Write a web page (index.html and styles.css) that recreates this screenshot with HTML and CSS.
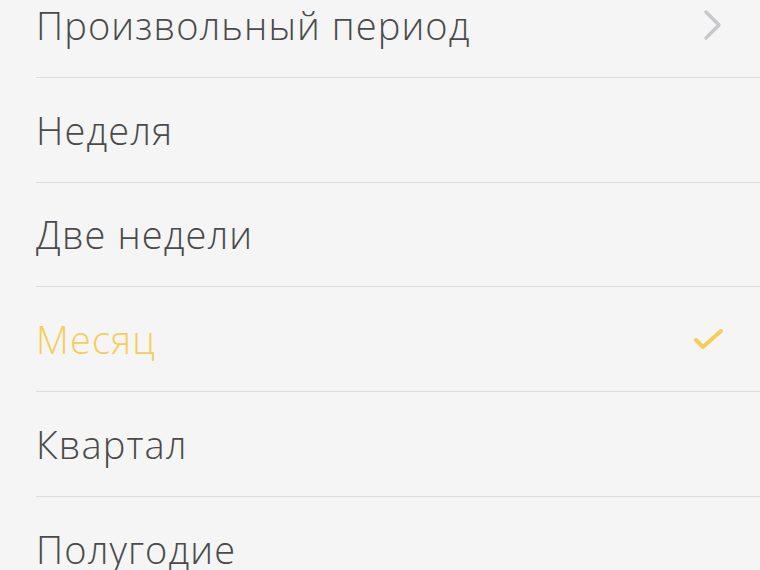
FILE: index.html
```html
<!DOCTYPE html>
<html lang="ru">
<head>
    <meta charset="UTF-8">
    <meta name="viewport" content="width=device-width, initial-scale=1.0">
    <title>Период</title>
    <link rel="stylesheet" href="styles.css">
</head>
<body>

    <ul class="periods">
        <li class="period">
            <span class="name">Произвольный период</span>
            <svg class="chevron" width="20" height="32" viewBox="0 0 20 32">
                <path d="M3 3 L16 16 L3 29" fill="none" stroke="#c8c8cc" stroke-width="3.5" stroke-linecap="round" stroke-linejoin="round"/>
            </svg>
        </li>
        <li class="period">
            <span class="name">Неделя</span>
        </li>
        <li class="period">
            <span class="name">Две недели</span>
        </li>
        <li class="period active">
            <span class="name">Месяц</span>
            <svg class="check" width="32" height="26" viewBox="0 0 32 26">
                <path d="M3 14 L10 21 L28 5" fill="none" stroke="#f6cd57" stroke-width="4" stroke-linecap="round" stroke-linejoin="round"/>
            </svg>
        </li>
        <li class="period">
            <span class="name">Квартал</span>
        </li>
        <li class="period">
            <span class="name">Полугодие</span>
        </li>
    </ul>

</body>
</html>
```

FILE: styles.css
```css
*{
    margin: 0;
    padding: 0;
    box-sizing: border-box;
}
body{
    background-color: #f5f5f5;
    font-family: 'Open Sans', 'Noto Sans', sans-serif;
    overflow: hidden;
    height: 570px;
}
.periods{
    list-style: none;
    margin-top: -27px;
    padding-left: 36px;
}
.period{
    display: flex;
    align-items: center;
    justify-content: space-between;
    height: 104.8px;
    padding-right: 36px;
    border-bottom: 1px solid #dcdcdc;
}
.name{
    font-size: 38px;
    font-weight: 300;
    color: #4a4a4a;
    letter-spacing: 1.1px;
}
.active .name{
    color: #f6cd57;
}
.chevron{
    margin-right: 1px;
}
.check{
    margin-right: -1px;
}
```
